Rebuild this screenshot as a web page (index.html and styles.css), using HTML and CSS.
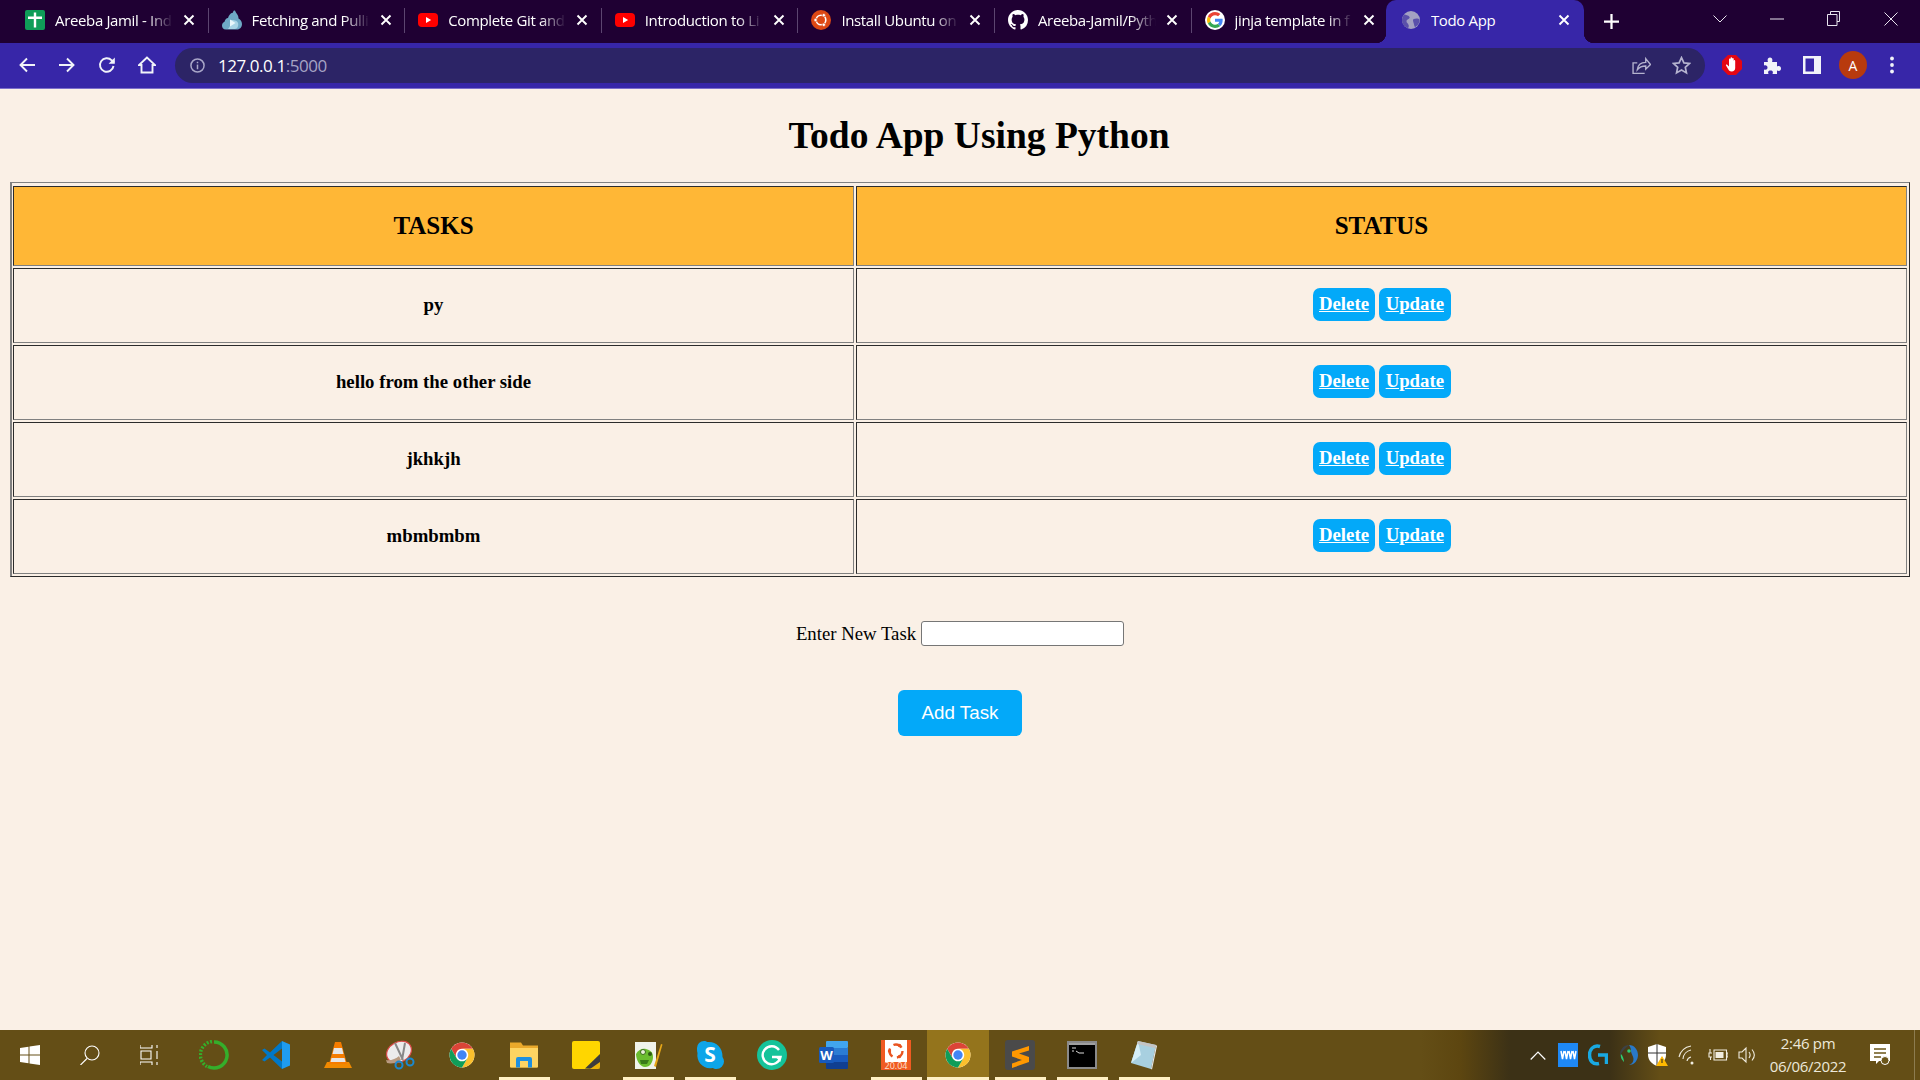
FILE: index.html
```html
<!DOCTYPE html>
<html lang="en">
<head>
<meta charset="utf-8">
<title>Todo App</title>
<link rel="stylesheet" href="styles.css">
</head>
<body>
<div class="screen">
  <header class="chrome">
    <div class="tabstrip">
      <div class="tab">
        <svg class="fav" viewBox="0 0 20 20"><rect width="20" height="20" rx="2" fill="#0f9d58"/><path d="M8.8 2.5h2.4v15H8.8zM3 6.5h14v2.4H3z" fill="#fff"/></svg>
        <span class="tab-title">Areeba Jamil - Ind</span>
        <svg class="tab-x" viewBox="0 0 12 12"><path d="M1.5 1.5l9 9m0-9l-9 9"/></svg>
      </div>
      <div class="tab">
        <svg class="fav" viewBox="0 0 20 20"><path d="M4 19.5c-3 0-4-2-4-4 0-2.200 1.500-3.500 2.500-3.800C3 9.500 4.500 8 6 8c.7-3 3-5 4-5 1.500 0 .8-2.500 2.500-2.500 1 0 1 2 2.500 3.500 1.200 1.500 1.500 3 1.500 4.500 1.500.7 3.500 2.500 3.500 5.500 0 3-2 5.500-5 5.500z" fill="#6ea9c6"/><path d="M6 19c2-2 3-5 3-9 2 0 6 0 7 3 1 3-1 6-3 6z" fill="#a8d4e6"/><path d="M8 9.500l5.500 3.500L8 16.500z" fill="#e8f6fb"/></svg>
        <span class="tab-title">Fetching and Pulli</span>
        <svg class="tab-x" viewBox="0 0 12 12"><path d="M1.5 1.5l9 9m0-9l-9 9"/></svg>
      </div>
      <div class="tab">
        <svg class="fav" viewBox="0 0 20 20"><rect y="3" width="20" height="14" rx="4" fill="#f00"/><path d="M8 7l5.200 3L8 13z" fill="#fff"/></svg>
        <span class="tab-title">Complete Git and</span>
        <svg class="tab-x" viewBox="0 0 12 12"><path d="M1.5 1.5l9 9m0-9l-9 9"/></svg>
      </div>
      <div class="tab">
        <svg class="fav" viewBox="0 0 20 20"><rect y="3" width="20" height="14" rx="4" fill="#f00"/><path d="M8 7l5.200 3L8 13z" fill="#fff"/></svg>
        <span class="tab-title">Introduction to Li</span>
        <svg class="tab-x" viewBox="0 0 12 12"><path d="M1.5 1.5l9 9m0-9l-9 9"/></svg>
      </div>
      <div class="tab">
        <svg class="fav" viewBox="0 0 20 20"><circle cx="10" cy="10" r="10" fill="#dd4814"/><circle cx="10" cy="10" r="4.800" fill="none" stroke="#fff" stroke-width="1.600"/><circle cx="4.500" cy="10" r="1.700" fill="#fff" stroke="#dd4814" stroke-width=".7"/><circle cx="12.800" cy="5.200" r="1.700" fill="#fff" stroke="#dd4814" stroke-width=".7"/><circle cx="12.800" cy="14.800" r="1.700" fill="#fff" stroke="#dd4814" stroke-width=".7"/></svg>
        <span class="tab-title">Install Ubuntu on</span>
        <svg class="tab-x" viewBox="0 0 12 12"><path d="M1.5 1.5l9 9m0-9l-9 9"/></svg>
      </div>
      <div class="tab">
        <svg class="fav" viewBox="0 0 16 16"><path fill="#fff" d="M8 0C3.580 0 0 3.580 0 8c0 3.540 2.290 6.530 5.470 7.590.4.070.55-.17.55-.38 0-.19-.01-.82-.01-1.490-2.010.37-2.530-.49-2.690-.94-.09-.23-.48-.94-.82-1.130-.28-.15-.68-.52-.01-.53.63-.01 1.080.58 1.230.82.72 1.210 1.870.87 2.330.66.07-.52.28-.87.51-1.070-1.780-.2-3.640-.89-3.640-3.950 0-.87.31-1.590.82-2.150-.08-.2-.36-1.020.08-2.120 0 0 .67-.21 2.200.82.64-.18 1.320-.27 2-.27.68 0 1.360.09 2 .27 1.530-1.040 2.200-.82 2.200-.82.44 1.100.16 1.920.08 2.120.51.56.82 1.270.82 2.150 0 3.070-1.870 3.750-3.650 3.950.29.25.54.73.54 1.480 0 1.070-.01 1.930-.01 2.200 0 .21.15.46.55.38A8.013 8.013 0 0016 8c0-4.420-3.580-8-8-8z"/></svg>
        <span class="tab-title">Areeba-Jamil/Pyth</span>
        <svg class="tab-x" viewBox="0 0 12 12"><path d="M1.5 1.5l9 9m0-9l-9 9"/></svg>
      </div>
      <div class="tab tab-last">
        <svg class="fav" viewBox="-6 -6 60 60"><circle cx="24" cy="24" r="30" fill="#fff"/><path fill="#EA4335" d="M24 9.500c3.540 0 6.710 1.220 9.210 3.600l6.850-6.850C35.900 2.380 30.470 0 24 0 14.620 0 6.510 5.380 2.560 13.220l7.980 6.190C12.430 13.720 17.740 9.500 24 9.500z"/><path fill="#4285F4" d="M46.980 24.550c0-1.570-.15-3.090-.38-4.550H24v9.020h12.940c-.58 2.960-2.260 5.480-4.780 7.180l7.730 6c4.510-4.180 7.090-10.360 7.090-17.650z"/><path fill="#FBBC05" d="M10.530 28.590c-.48-1.450-.76-2.990-.76-4.590s.27-3.140.76-4.590l-7.980-6.190C.92 16.460 0 20.120 0 24c0 3.880.92 7.540 2.560 10.780l7.970-6.190z"/><path fill="#34A853" d="M24 48c6.480 0 11.930-2.130 15.890-5.810l-7.730-6c-2.150 1.450-4.920 2.300-8.160 2.300-6.260 0-11.570-4.220-13.470-9.910l-7.980 6.190C6.510 42.620 14.620 48 24 48z"/></svg>
        <span class="tab-title">jinja template in f</span>
        <svg class="tab-x" viewBox="0 0 12 12"><path d="M1.5 1.5l9 9m0-9l-9 9"/></svg>
      </div>
      <div class="tab-active">
        <svg class="fav fav-globe" viewBox="0 0 20 20"><circle cx="10" cy="10" r="10" fill="#a3a1c2"/><path d="M3 3.500C5 5 8 4.500 8.500 7 8.800 9 5.500 9 5 11 4.600 13 7 13.500 7.500 16c.2 1.500-.5 2.800-1.200 3C2.500 17.500 0 14 0 10 0 7.500 1.200 5 3 3.500zM13 9c2-.8 5-1 6.500.5.300 3.500-2 7-5 8.500-1-1.500-1-3-1.500-4.500C12.500 12 11.500 10 13 9z" fill="#5a50aa"/></svg>
        <span class="tab-title active-title">Todo App</span>
        <svg class="tab-x" viewBox="0 0 12 12"><path d="M1.5 1.500l9 9m0-9l-9 9"/></svg>
      </div>
      <svg class="new-tab" viewBox="0 0 16 16"><path d="M8 0v16M0 8h16"/></svg>
      <div class="win">
        <svg class="win-chev" viewBox="0 0 14 8"><path d="M.5.5L7 7l6.500-6.500"/></svg>
        <svg class="win-min" viewBox="0 0 14 2"><path d="M0 1h14"/></svg>
        <svg class="win-rest" viewBox="0 0 13 15"><path d="M3.500 3V.5h9v10H10M.5 3.500h9.500v11H.5z"/></svg>
        <svg class="win-close" viewBox="0 0 14 14"><path d="M.5.5l13 13m0-13l-13 13"/></svg>
      </div>
    </div>
    <div class="toolbar">
      <svg class="tool" viewBox="0 0 18 18"><path d="M17 9H2.500M9 2.500L2.500 9 9 15.500"/></svg>
      <svg class="tool" viewBox="0 0 18 18"><path d="M1 9h14.500M9 2.500L15.500 9 9 15.500"/></svg>
      <svg class="tool" viewBox="0 0 18 18"><path d="M15.500 10a6.800 6.800 0 1 1-1.800-5.700L16 6.500"/><path class="solid" d="M16.800 1.500v6.200h-6.200z"/></svg>
      <svg class="tool" viewBox="0 0 18 18"><path d="M9 1.500L1 9h2.500v7.500h11V9H17z"/></svg>
      <div class="omnibox">
        <svg class="info" viewBox="0 0 16 16"><circle cx="8" cy="8" r="7"/><path d="M8 7v5"/><path d="M8 4v1.600"/></svg>
        <span class="url">127.0.0.1<span class="url-port">:5000</span></span>
        <svg class="share" viewBox="0 0 18 18"><path d="M12 16.500H1V6.500h4M5 13c.5-4.500 3.500-7 8-7V2.500L17.500 8 13 12.500V9.500c-3.500 0-6 1-8 3.500z"/></svg>
        <svg class="star" viewBox="0 0 18 18"><path d="M9 1.500l2.300 5 5.200.6-3.900 3.600 1.100 5.300L9 13.300 4.300 16l1.100-5.300-3.900-3.600 5.200-.6z"/></svg>
      </div>
      <svg class="ext ext-abp" viewBox="0 0 20 20"><path d="M6 0h8l6 6v8l-6 6H6l-6-6V6z" fill="#e40613"/><path d="M7 15.500L4 10.500c-.4-.9.600-1.500 1.200-.8L7 11.500V4.500c0-1.300 1.500-1.300 1.500 0V9V3.200c0-1.300 1.700-1.300 1.700 0V9V3.800c0-1.200 1.500-1.200 1.500 0V9.500V6c0-1.200 1.500-1.200 1.500 0v7c0 2-1.500 3.500-3.500 3.500c-1 0-2-.3-2.700-1z" fill="#fff"/></svg>
      <svg class="ext ext-puzzle" viewBox="0 0 18 18"><path d="M1 6h4C4 3.500 5 1.500 7 1.500S10 3.500 9 6h5v4.500c2.500-1 4 0 4 2s-1.500 3-4 2V18H9.500c1-2.500 0-3.500-2-3.500s-3 1-2 3.500H1v-4.500c2 .8 3.500-.2 3.500-2S3 8.700 1 9.500z" fill="#f1f3f9"/></svg>
      <svg class="ext ext-side" viewBox="0 0 18 18"><path d="M0 0h18v18H0zM2.500 2.500v13H11v-13z" fill="#f1f3f9" fill-rule="evenodd"/></svg>
      <span class="avatar">A</span>
      <svg class="ext ext-dots" viewBox="0 0 4 18"><circle cx="2" cy="2.500" r="1.900"/><circle cx="2" cy="9" r="1.900"/><circle cx="2" cy="15.500" r="1.900"/></svg>
    </div>
  </header>

  <main class="page">
    <h1 class="title">Todo App Using Python</h1>
    <table class="tasks" border="1">
      <thead>
        <tr><th class="col-task">TASKS</th><th>STATUS</th></tr>
      </thead>
      <tbody>
        <tr><td>py</td><td><a class="act" href="#">Delete</a> <a class="act" href="#">Update</a></td></tr>
        <tr><td>hello from the other side</td><td><a class="act" href="#">Delete</a> <a class="act" href="#">Update</a></td></tr>
        <tr><td>jkhkjh</td><td><a class="act" href="#">Delete</a> <a class="act" href="#">Update</a></td></tr>
        <tr><td>mbmbmbm</td><td><a class="act" href="#">Delete</a> <a class="act" href="#">Update</a></td></tr>
      </tbody>
    </table>
    <form class="add-form">
      <label class="add-row">Enter New Task <input class="add-input" type="text"></label>
      <button class="add-btn" type="button">Add Task</button>
    </form>
  </main>

  <footer class="taskbar">
    <div class="tb-sys">
      <svg class="sys-icon" viewBox="0 0 20 20"><path d="M0 3l8.500-1.200V9.500H0zM9.500 1.600L20 0v9.500H9.500zM0 10.500h8.500v7.700L0 17zM9.500 10.500H20V20L9.500 18.400z" fill="#fff"/></svg>
    </div>
    <div class="tb-sys">
      <svg class="sys-icon line" viewBox="0 0 20 20"><circle cx="12" cy="8" r="7"/><path d="M7 13.500L.5 20"/></svg>
    </div>
    <div class="tb-sys">
      <svg class="sys-icon line" viewBox="0 0 20 20"><path d="M0 0v3h12V0M1 6h10v8H1zM0 20v-3h12v3M17 0v3M17 6v8M17 17v3"/></svg>
    </div>
    <div class="tb-apps">
      <div class="app"><svg viewBox="0 0 30 30"><path d="M15 2a13 13 0 1 1-6 24.500" fill="none" stroke="#35ae2b" stroke-width="3.500"/><path d="M13 1.500a13.500 13.500 0 0 0-5 25" fill="none" stroke="#35ae2b" stroke-width="3.500" stroke-dasharray="2 1.500"/></svg></div>
      <div class="app"><svg viewBox="0 0 30 30"><path d="M21 1l8 3.500v21L21 29z" fill="#1f9cf0"/><path d="M21 1L9 12.500 3.500 8.500 1 10l5 5-5 5 2.500 1.500L9 17.500 21 29v-7.500L12.500 15 21 8.500z" fill="#0078c8"/></svg></div>
      <div class="app"><svg viewBox="0 0 30 30"><path d="M1 28l3-6h22l3 6z" fill="#f08a00"/><path d="M12 2h6l6 22H6z" fill="#f57c00"/><path d="M11 8h8l1.500 6h-11zM8.500 18h13l1 4h-15z" fill="#e6e6e6"/></svg></div>
      <div class="app"><svg viewBox="0 0 30 30"><ellipse cx="14" cy="12" rx="13" ry="10" transform="rotate(-28 14 12)" fill="#ececec" stroke="#dc4c4c" stroke-width="1.200"/><path d="M1 20c4 1 10-1 13-4l2 4c-4 3-10 4-14 3z" fill="#b89a80"/><path d="M10 3l8 17M20 3L17 20" stroke="#888" stroke-width="2"/><circle cx="14" cy="25" r="3.500" fill="none" stroke="#1b8ad0" stroke-width="2"/><circle cx="25" cy="22" r="3.500" fill="none" stroke="#1b8ad0" stroke-width="2"/></svg></div>
      <div class="app"><svg viewBox="0 0 48 48"><circle cx="24" cy="24" r="20" fill="#fff"/><path fill="#db4437" d="M6.680 14A20 20 0 0 1 41.320 14H24A10 10 0 0 0 15.340 29z"/><path fill="#fbc02d" d="M41.320 14A20 20 0 0 1 24 44L32.660 29A10 10 0 0 0 24 14z"/><path fill="#0f9d58" d="M24 44A20 20 0 0 1 6.680 14L15.340 29A10 10 0 0 0 32.660 29z"/><circle cx="24" cy="24" r="7.500" fill="#4285f4"/></svg></div>
      <div class="app running"><svg viewBox="0 0 30 30"><path d="M1 2.500h11l2 3h15v21a1 1 0 0 1-1 1H2a1 1 0 0 1-1-1z" fill="#eaa92b"/><path d="M1 8h28v18.500a1 1 0 0 1-1 1H2a1 1 0 0 1-1-1z" fill="#fdd462"/><path d="M7 27.500V19a2 2 0 0 1 2-2h12a2 2 0 0 1 2 2v8.500h-4V21h-8v6.500z" fill="#1e90e0"/></svg></div>
      <div class="app"><svg viewBox="0 0 30 30"><rect x="1" y="1" width="28" height="28" rx="2" fill="#ffd600"/><path d="M14 28.500L29 14v13a2 2 0 0 1-2 2z" fill="#3c3c3c"/><path d="M29 22v5a2 2 0 0 1-2 2h-8z" fill="#eab308"/></svg></div>
      <div class="app running"><svg viewBox="0 0 30 30"><path d="M2 2h21v27H2z" fill="#f0f3ea"/><path d="M3 14c2-4 6-6 10-5s7 3 7 8-3 10-8 10-9-7-9-13z" fill="#6bbd2f"/><circle cx="10" cy="12" r="2.500" fill="#e8f0d8" stroke="#3a6b1a"/><circle cx="17" cy="14" r="2" fill="#2d5a12"/><path d="M7 20h9l-2 4H8z" fill="#3a7a1a"/><path d="M21 26L28 4l1.500.5L23 27z" fill="#e8a818"/></svg></div>
      <div class="app running"><svg viewBox="0 0 30 30"><path d="M2 8A7 7 0 0 1 9 1c1.500 0 2.500.5 3.500 1C20 1 28 7 27.500 17c1 1.500 1.500 3 1.500 4.500A7.500 7.500 0 0 1 21.500 29c-1.500 0-3-.5-4-1C9 30 1 22 2.500 13 2 11.500 2 9.500 2 8z" fill="#0ea5e9"/><text class="app-letter" x="15" y="22" font-size="21" text-anchor="middle">S</text></svg></div>
      <div class="app"><svg viewBox="0 0 30 30"><circle cx="15" cy="15" r="15" fill="#15c39a"/><path d="M22 10a9 9 0 1 0 1.500 7H15" fill="none" stroke="#fff" stroke-width="2.400"/><path d="M23.500 22v-6h-6z" fill="#fff"/></svg></div>
      <div class="app"><svg viewBox="0 0 30 30"><rect x="7" y="1" width="22" height="7" rx="1" fill="#41a5ee"/><rect x="7" y="8" width="22" height="7" fill="#2b7cd3"/><rect x="7" y="15" width="22" height="7" fill="#185abd"/><path d="M7 22h22v6a1 1 0 0 1-1 1H8a1 1 0 0 1-1-1z" fill="#103f91"/><rect x="0" y="7" width="15" height="16" rx="1.500" fill="#185abd"/><text class="app-letter" x="7.500" y="20" font-size="13" text-anchor="middle">W</text></svg></div>
      <div class="app running"><svg viewBox="0 0 30 30"><rect width="30" height="30" fill="#f05a22"/><rect x="4" y="0" width="22" height="22" fill="#fff"/><circle cx="15" cy="11" r="6.500" fill="none" stroke="#e95420" stroke-width="2.400" stroke-dasharray="9 4.600"/><circle cx="8.500" cy="11" r="1.700" fill="#e95420"/><circle cx="18.500" cy="5.500" r="1.700" fill="#e95420"/><circle cx="18.500" cy="16.500" r="1.700" fill="#e95420"/><text class="ubu-ver" x="15" y="28.500" font-size="9" text-anchor="middle">20.04</text></svg></div>
      <div class="app active"><svg viewBox="0 0 48 48"><circle cx="24" cy="24" r="20" fill="#fff"/><path fill="#db4437" d="M6.680 14A20 20 0 0 1 41.320 14H24A10 10 0 0 0 15.340 29z"/><path fill="#fbc02d" d="M41.320 14A20 20 0 0 1 24 44L32.660 29A10 10 0 0 0 24 14z"/><path fill="#0f9d58" d="M24 44A20 20 0 0 1 6.680 14L15.340 29A10 10 0 0 0 32.660 29z"/><circle cx="24" cy="24" r="7.500" fill="#4285f4"/></svg></div>
      <div class="app running"><svg viewBox="0 0 30 30"><rect width="30" height="30" rx="3" fill="#4a4a4a"/><path d="M24 6L7 11.500v5l10 3.500-10 3.500V28l17-6v-5l-10-3.500L24 10.500z" fill="#ff9800"/></svg></div>
      <div class="app running"><svg viewBox="0 0 30 30"><rect x="1" y="2" width="28" height="26" fill="#000" stroke="#8a8a8a" stroke-width="2"/><rect x="2" y="3" width="26" height="2" fill="#a0a0a0"/><path d="M5 8h4M5 11h2M9 11l3 2h5" stroke="#ddd" stroke-width="1" fill="none"/></svg></div>
      <div class="app running"><svg viewBox="0 0 30 30"><path d="M9 1l18 4-5 24-20-6z" fill="#a8d0e0"/><path d="M9 1L2 23l10-8z" fill="#d6eef6"/><path d="M9 1l18 4-1 3L8 4z" fill="#c4c4c4"/><path d="M22 29l5-24 1 1-5 23.500z" fill="#e8e8e8"/></svg></div>
    </div>
    <div class="tray">
      <svg class="tr-chev" viewBox="0 0 16 9"><path d="M.7 8.500L8 1l7.300 7.500"/></svg>
      <svg class="tr-i" viewBox="0 0 20 24"><rect width="20" height="24" fill="#1e88f5"/><path d="M3 8l1.500 8L6 8m1 0l1.500 8L10 8m1 0l1.500 8L14 8m1 0l1.500 8L18 8" stroke="#fff" stroke-width="1.500" fill="none"/></svg>
      <svg class="tr-i" viewBox="0 0 20 24"><path d="M12 3.500C5 1.500 1.500 7 1.500 12s3 10 9.500 8.500" fill="none" stroke="#19a9e2" stroke-width="3.500"/><path d="M10 12h8.500v9" fill="none" stroke="#19a9e2" stroke-width="3.500"/></svg>
      <svg class="tr-i" viewBox="0 0 20 24"><path d="M11 2c5.500 0 9 5 9 10s-3.500 10-9 10c3-1 4.500-3 4.500-6S13 11 13 8c0-2.500-1-4.500-2-6z" fill="#2979c9"/><path d="M11 2C5.500 2 2 6.500 2 12c0 .5 0 1 .1 1.500C3 9 7 6 11 2z" fill="#2d4f8f" opacity=".4"/><path d="M3 11c2 2 3 6 3 8-2-2-4-5-3-8z" fill="#2ecc71"/><circle cx="11" cy="8" r="1.800" fill="#2ecc71"/></svg>
      <svg class="tr-i" viewBox="0 0 20 24"><path d="M9 1l9 3v8c0 5-4 9-9 11-5-2-9-6-9-11V4z" fill="#fff"/><path d="M9 1v22M0 10h18" stroke="#333" stroke-width="1"/><path d="M14 13l6 10H8z" fill="#ffb900"/><path d="M13.500 16h1v4h-1z" fill="#222"/></svg>
      <svg class="tr-i thin" viewBox="0 0 20 24"><path d="M1 14a15 15 0 0 1 12-11M5 16a10 10 0 0 1 8-9M9 18a5 5 0 0 1 4-4"/><circle class="fillw" cx="14" cy="20" r="1.500"/></svg>
      <svg class="tr-i thin" viewBox="0 0 20 24"><path d="M6 7h12.500v10H6zM18.500 10H20v4h-1.500M4 10H1v4h3M2 6v4M2.500 14v3"/><path class="fillw" d="M7.500 9h8v6h-8z"/></svg>
      <svg class="tr-i thin" viewBox="0 0 20 24"><path d="M1 9h3l4-4v14l-4-4H1zM11 9c1.500 2 1.500 4 0 6M14 6.500c3 3.500 3 7.500 0 11"/></svg>
      <div class="clock"><span>2:46 pm</span><span>06/06/2022</span></div>
      <svg class="notif" viewBox="0 0 20 22"><path d="M0 0h20v17H9l-3 3v-3H0z" fill="#fff"/><path d="M4 5h12M4 9h12M4 13h7" stroke="#6b5518" stroke-width="1.300"/><circle cx="15" cy="16.500" r="4" fill="#6b5518" stroke="#fff"/></svg>
    </div>
  </footer>
</div>
</body>
</html>
```

FILE: styles.css
```css
* { box-sizing: border-box; }
html, body { margin: 0; padding: 0; height: 100%; overflow: hidden; }
.screen {
  width: 1920px;
  height: 1080px;
  display: flex;
  flex-direction: column;
  background: #faf0e6;
  font-family: "Liberation Serif", serif;
}

/* Browser chrome */
.chrome { flex: none; height: 89px; display: flex; flex-direction: column; font-family: "Open Sans", sans-serif; color: #fff; }
.tabstrip { height: 43px; background: #1f0033; display: flex; align-items: center; padding-left: 12px; }
.tab {
  flex: none;
  width: 196.6px;
  height: 25px;
  margin-top: -3px;
  padding-left: 13px;
  display: flex;
  align-items: center;
  gap: 10px;
  border-right: 1px solid #5c4570;
}
.tab-last { width: 194.4px; border-right: 0; }
.fav { flex: none; width: 20px; height: 20px; }
.tab-title {
  width: 118px;
  font-size: 15px;
  letter-spacing: -0.35px;
  white-space: nowrap;
  overflow: hidden;
  -webkit-mask-image: linear-gradient(90deg, #000 78%, transparent 100%);
  mask-image: linear-gradient(90deg, #000 78%, transparent 100%);
}
.tab-x { flex: none; width: 12px; height: 12px; fill: none; stroke: #fff; stroke-width: 1.9; }
.tab-active {
  position: relative;
  flex: none;
  width: 198px;
  height: 43px;
  padding: 0 0 3px 16px;
  display: flex;
  align-items: center;
  background: #3726a8;
  border-radius: 10px 10px 0 0;
}
.tab-active::before, .tab-active::after {
  content: "";
  position: absolute;
  bottom: 0;
  width: 10px;
  height: 10px;
}
.tab-active::before { left: -10px; background: radial-gradient(circle at 0 0, transparent 10px, #3726a8 10.5px); }
.tab-active::after { right: -10px; background: radial-gradient(circle at 100% 0, transparent 10px, #3726a8 10.5px); }
.tab-active .fav-globe { width: 18px; height: 18px; }
.tab-active .active-title { width: 122px; margin-left: 11px; -webkit-mask-image: none; mask-image: none; }
.tab-active .tab-x { margin-left: 5px; }
.new-tab { flex: none; width: 15px; height: 15px; margin-left: 20px; fill: none; stroke: #fff; stroke-width: 2.4; }
.win { margin-left: auto; display: flex; align-items: center; padding-right: 22px; }
.win svg { flex: none; fill: none; stroke: #e8e4ee; stroke-width: 1; }
.win-chev { width: 14px; height: 8px; margin-top: -6px; }
.win-min { width: 14px; height: 2px; margin-left: 43px; margin-top: -6px; }
.win-rest { width: 13px; height: 15px; margin-left: 43px; margin-top: -6px; }
.win-close { width: 14px; height: 14px; margin-left: 44px; margin-top: -6px; }

.toolbar {
  height: 46px;
  background: #3726a8;
  border-bottom: 1px solid #7d6fca;
  display: flex;
  align-items: center;
  padding-left: 18px;
  padding-bottom: 1px;
}
.tool { flex: none; width: 18px; height: 18px; margin-right: 22px; fill: none; stroke: #f1f3f9; stroke-width: 1.9; }
.tool .solid { fill: #f1f3f9; stroke: none; }
.omnibox {
  flex: none;
  width: 1530px;
  height: 35px;
  margin-left: -3px;
  padding-left: 15px;
  background: #2c2466;
  border-radius: 18px;
  display: flex;
  align-items: center;
}
.info { flex: none; width: 15px; height: 15px; fill: none; stroke: #a9a6c8; stroke-width: 1.600; }
.url { margin-left: 13px; font-size: 17px; letter-spacing: -0.45px; color: #fff; }
.url-port { color: #a6a3c4; }
.share, .star { flex: none; width: 19px; height: 19px; fill: none; stroke: #b5b3cf; stroke-width: 1.300; }
.share { margin-left: auto; }
.star { margin-left: 21px; margin-right: 14px; stroke-width: 1.600; }
.ext { flex: none; }
.ext-abp { width: 20px; height: 24px; margin-left: 17px; }
.ext-puzzle { width: 18px; height: 18px; margin-left: 21px; }
.ext-side { width: 18px; height: 18px; margin-left: 22px; }
.avatar {
  flex: none;
  width: 28px;
  height: 28px;
  margin-left: 18px;
  border-radius: 50%;
  background: #b83a0e;
  display: flex;
  align-items: center;
  justify-content: center;
  font-size: 14px;
  color: #fff;
}
.ext-dots { width: 4px; height: 18px; margin-left: 23px; fill: #f1f3f9; }

/* Page */
.page { flex: 1; min-height: 0; padding: 24px 10px 0; }
.title { margin: 0 0 23px; padding-left: 38px; font-size: 37.5px; line-height: 46px; font-weight: bold; text-align: center; color: #000; }
.tasks {
  width: 1900px;
  table-layout: fixed;
  border-collapse: separate;
  border-spacing: 2px;
  padding-top: 1px;
  border: 1px solid;
  border-color: #808080 #2b2b2b #2b2b2b #808080;
  box-shadow: inset 1px 0 #808080;
}
.tasks th, .tasks td {
  border: 1px solid;
  border-color: #2b2b2b #808080 #808080 #2b2b2b;
  padding: 0;
  text-align: center;
  vertical-align: middle;
  color: #000;
}
.tasks th { height: 80px; background: #ffb736; font-size: 25px; font-weight: bold; }
.col-task { width: 841px; }
.tasks td { height: 75px; padding-bottom: 2px; font-size: 18.75px; font-weight: bold; }
.act {
  display: inline-block;
  height: 33px;
  line-height: 31px;
  padding: 0 6.500px;
  background: #03a9f9;
  border-radius: 7px;
  color: #fff;
  font-size: 18.75px;
  font-weight: bold;
  text-decoration: underline;
}
.act + .act { margin-left: -1px; }
.add-form { display: flex; flex-direction: column; align-items: center; }
.add-row { margin-top: 44px; height: 25px; display: flex; align-items: center; gap: 5px; font-size: 18.75px; color: #000; }
.add-input { width: 203px; height: 25px; margin: 0; padding: 0 2px; background: #fff; border: 1px solid #767676; border-radius: 3px; }
.add-btn {
  width: 124px;
  height: 46px;
  margin-top: 44px;
  background: #03a9f9;
  border: 0;
  border-radius: 6px;
  color: #fff;
  font-family: "Liberation Sans", sans-serif;
  font-size: 18.75px;
}

/* Taskbar */
.taskbar {
  flex: none;
  height: 50px;
  display: flex;
  align-items: stretch;
  color: #ece8da;
  font-family: "Open Sans", sans-serif;
  background: linear-gradient(90deg, #644e16 0, #644e16 1420px, #5d4610 1460px, #3c3116 1510px, #3c3116 1610px, #644e16 1660px);
}
.tb-sys { flex: none; width: 60px; display: flex; align-items: center; justify-content: center; }
.sys-icon { width: 20px; height: 20px; }
.sys-icon.line { fill: none; stroke: #fff; stroke-width: 1.100; }
.tb-apps { display: flex; margin-left: 3px; }
.app {
  flex: none;
  width: 62px;
  display: flex;
  align-items: center;
  justify-content: center;
}
.app svg { width: 30px; height: 30px; }
.running { background: linear-gradient(#fff0c4, #fff0c4) center bottom / 51px 3px no-repeat; }
.active { background: linear-gradient(#fff0c4, #fff0c4) center bottom / 100% 3px no-repeat, #94741c; }
.app-letter { font-family: "Open Sans", sans-serif; font-weight: bold; fill: #fff; }
.ubu-ver { font-family: "Open Sans", sans-serif; fill: #ffe0d0; }
.tray { margin-left: auto; margin-right: 5px; display: flex; align-items: center; border-right: 1px solid #8c7c50; }
.tr-chev { flex: none; width: 16px; height: 9px; margin-right: 12px; fill: none; stroke: #fff; stroke-width: 1.200; }
.tr-i { flex: none; width: 20px; height: 24px; margin-right: 10px; }
.thin { fill: none; stroke: #f0ecdf; stroke-width: 1.100; }
.fillw { fill: #f0ecdf; stroke: none; }
.clock { flex: none; width: 84px; margin-left: -2px; display: flex; flex-direction: column; align-items: center; font-size: 15px; line-height: 23px; letter-spacing: -0.3px; white-space: nowrap; }
.notif { flex: none; width: 20px; height: 22px; margin-left: 20px; margin-right: 24px; }
```
